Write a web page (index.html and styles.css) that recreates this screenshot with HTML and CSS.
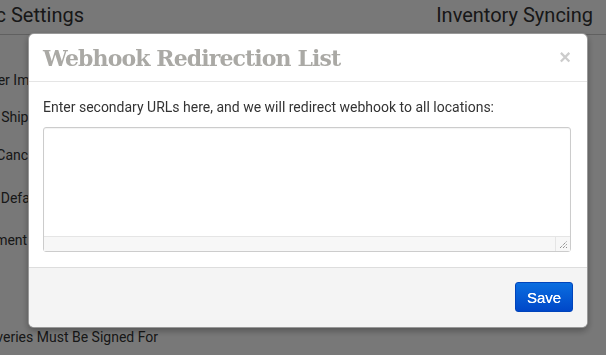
FILE: index.html
```html
<!DOCTYPE html>
<html lang="en">
<head>
<meta charset="UTF-8">
<meta name="viewport" content="width=device-width, initial-scale=1.0">
<title>Webhook Redirection List</title>
<link rel="stylesheet" href="styles.css">
</head>
<body>
<div class="page">
    <div class="page-tabs">
        <h2 class="tab-title">Basic Settings</h2>
        <h2 class="tab-title">Inventory Syncing</h2>
    </div>
    <div class="settings-list">
        <div class="setting-row row-1">Order Import Date Range Cap</div>
        <div class="setting-row row-2">Shipment Notification CC</div>
        <div class="setting-row row-3">Cancel Unpaid Order After</div>
        <div class="setting-row row-4">Default Parcel Dimension</div>
        <div class="setting-row row-5">Shipment Value Insurance Cap</div>
        <div class="setting-row row-6">Deliveries Must Be Signed For</div>
    </div>
</div>

<!-- webhook popup -->
<div class="modal-overlay">
    <div class="modal">
        <div class="modal-header">
            <h3>Webhook Redirection List</h3>
            <span class="close">&times;</span>
        </div>
        <div class="modal-body">
            <p>Enter secondary URLs here, and we will redirect webhook to all locations:</p>
            <div class="url-box">
                <textarea class="url-input"></textarea>
                <div class="url-status">
                    <span class="grip">
                        <svg width="9" height="9" viewBox="0 0 9 9"><path d="M1 8L8 1M4 8L8 4M7 8L8 7" stroke="#666" stroke-width="1" stroke-dasharray="1 1"/></svg>
                    </span>
                </div>
            </div>
        </div>
        <div class="modal-footer">
            <button type="button" class="btn-save">Save</button>
        </div>
    </div>
</div>
</body>
</html>
```

FILE: styles.css
```css
body {
    margin: 0;
    background-color: white;
    font-family: Roboto, "Liberation Sans", sans-serif;
    color: #333333;
    overflow: hidden;
}
.page-tabs {
    display: flex;
    justify-content: space-between;
    height: 34px;
    border-bottom: 1px solid #cccccc;
    padding-right: 13px;
    margin-left: -43px;
}
.tab-title {
    margin: 0;
    font-size: 20px;
    font-weight: normal;
    line-height: 30px;
    white-space: nowrap;
}
.settings-list {
    width: 158px;
    text-align: right;
    font-size: 14px;
}
.setting-row {
    height: 20px;
    line-height: 20px;
    white-space: nowrap;
    display: flex;
    justify-content: flex-end;
}
.row-1 { margin-top: 35px; }
.row-2 { margin-top: 17px; }
.row-3 { margin-top: 18px; }
.row-4 { margin-top: 23px; }
.row-5 { margin-top: 22px; }
.row-6 { margin-top: 77px; }

.modal-overlay {
    position: fixed;
    top: 0;
    left: 0;
    width: 100%;
    height: 100%;
    background-color: rgba(0, 0, 0, 0.53);
    display: flex;
    align-items: flex-start;
    padding: 33px 0 0 28px;
    box-sizing: border-box;
}
.modal {
    width: 560px;
    box-sizing: border-box;
    background-color: white;
    border: 1px solid rgba(0, 0, 0, 0.4);
    border-radius: 6px;
    box-shadow: 0 3px 7px rgba(0, 0, 0, 0.3);
    overflow: hidden;
}
.modal-header {
    display: flex;
    justify-content: space-between;
    align-items: center;
    height: 47px;
    padding: 0 14px;
    border-bottom: 1px solid #e5e5e5;
}
.modal-header h3 {
    margin: 0;
    font-family: "DejaVu Serif", serif;
    font-weight: bold;
    font-size: 22px;
    letter-spacing: -0.9px;
    color: #aaa9a5;
}
.close {
    font-family: "Liberation Sans", sans-serif;
    font-size: 20px;
    font-weight: bold;
    color: #cccccc;
    margin-right: 2px;
}
.modal-body {
    padding: 15px 14px 15px;
}
.modal-body p {
    margin: 0 0 10px;
    font-size: 14px;
    line-height: 20px;
    color: #333333;
}
.url-box {
    width: 528px;
    height: 125px;
    border: 1px solid #cccccc;
    border-radius: 3px;
    box-sizing: border-box;
    display: flex;
    flex-direction: column;
    box-shadow: inset 0 1px 1px rgba(0, 0, 0, 0.05);
}
.url-input {
    flex: 1;
    border: none;
    outline: none;
    resize: none;
    background: transparent;
    padding: 6px;
    font-family: Roboto, sans-serif;
}
.url-status {
    height: 14px;
    border-top: 1px solid #e5e5e5;
    background-color: #f7f7f7;
    display: flex;
    justify-content: flex-end;
}
.grip {
    width: 15px;
    border-left: 1px solid #e5e5e5;
    display: flex;
    align-items: flex-end;
    justify-content: flex-end;
    padding: 0 2px 2px 0;
    box-sizing: border-box;
}
.grip svg {
    display: block;
}
.modal-footer {
    display: flex;
    justify-content: flex-end;
    padding: 14px 14px 15px;
    background-color: #f4f4f4;
    border-top: 1px solid #dddddd;
}
.btn-save {
    width: 58px;
    height: 30px;
    border: 1px solid #0044bb;
    border-radius: 3px;
    background: linear-gradient(#0a6ee0, #0047c8);
    color: white;
    font-family: "Liberation Sans", sans-serif;
    font-size: 15px;
    text-shadow: 0 0 0.5px white;
    cursor: pointer;
}
```
